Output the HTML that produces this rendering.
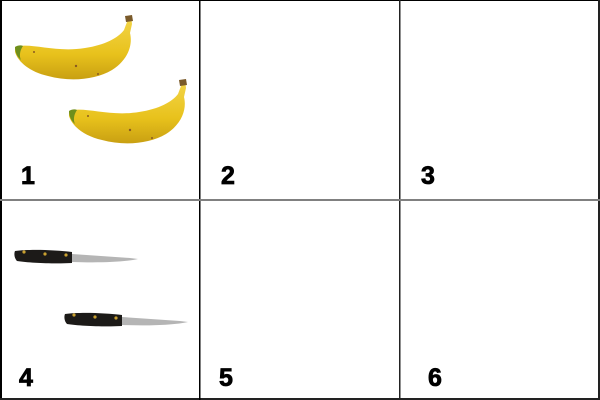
<!DOCTYPE html>
<html><head><style>
html,body{margin:0;padding:0;background:#fff;width:600px;height:400px;overflow:hidden}
svg{display:block}
text{font-family:"Liberation Sans",sans-serif;font-weight:bold;font-size:25px;fill:#000;stroke:#000;stroke-width:0.8}
</style></head><body>
<svg width="600" height="400" viewBox="0 0 600 400">
<rect x="0" y="0" width="600" height="400" fill="#fff"/>
<defs>
<linearGradient id="bg" x1="0" y1="0" x2="0" y2="1">
<stop offset="0" stop-color="#f3d54a"/><stop offset="0.6" stop-color="#e8c21c"/><stop offset="1" stop-color="#c9a012"/>
</linearGradient>
<g id="banana">
<path d="M15,47 C30,42 55,53 85,48 C105,45 118,38 124,30 L127,22 L126,17 L131,16 L132,24 L130,33 C133,45 128,60 112,70 C95,80 70,82 48,76 C30,72 18,62 15,52 Z" fill="url(#bg)"/>
<path d="M15,47 C18,45 21,45 23,46 C20,50 19,56 21,60 C17,57 15,52 15,47Z" fill="#6f8f1c"/>
<path d="M125,16 L132,15 L133,21 L126,22Z" fill="#7a5a2a"/>
<circle cx="34" cy="52" r="1" fill="#8a5a20"/><circle cx="76" cy="66" r="1.2" fill="#8a5a20"/><circle cx="98" cy="74" r="1" fill="#8a5a20"/>
</g>
<g id="knife">
<path d="M15,251 C30,249 55,250 72,252 L72,263 C55,264 30,263 17,261 C14,258 14,253 15,251Z" fill="#1c1a18"/>
<circle cx="24" cy="252" r="1.6" fill="#c9a030"/><circle cx="45" cy="254" r="1.6" fill="#c9a030"/><circle cx="66" cy="255" r="1.6" fill="#c9a030"/>
<path d="M72,254 L130,258 L138,259 C125,262 100,263 72,262Z" fill="#b5b5b5"/>
</g>
</defs>
<use href="#banana"/>
<use href="#banana" transform="translate(54,64)"/>
<use href="#knife"/>
<use href="#knife" transform="translate(50,63)"/>
<text x="21" y="184">1</text>
<text x="221" y="184">2</text>
<text x="421" y="184">3</text>
<text x="19" y="386">4</text>
<text x="219" y="386">5</text>
<text x="428" y="386">6</text>
<rect x="0" y="0" width="600" height="1" fill="#000"/>
<rect x="0" y="0" width="2" height="400" fill="#000"/>
<rect x="598" y="0" width="2" height="400" fill="#222"/>
<rect x="0" y="398" width="600" height="2" fill="#222"/>
<rect x="199" y="0" width="1.5" height="400" fill="#000"/>
<rect x="399" y="0" width="1.5" height="400" fill="#222"/>
<rect x="0" y="199" width="600" height="2" fill="#808080"/>
</svg>
</body></html>
